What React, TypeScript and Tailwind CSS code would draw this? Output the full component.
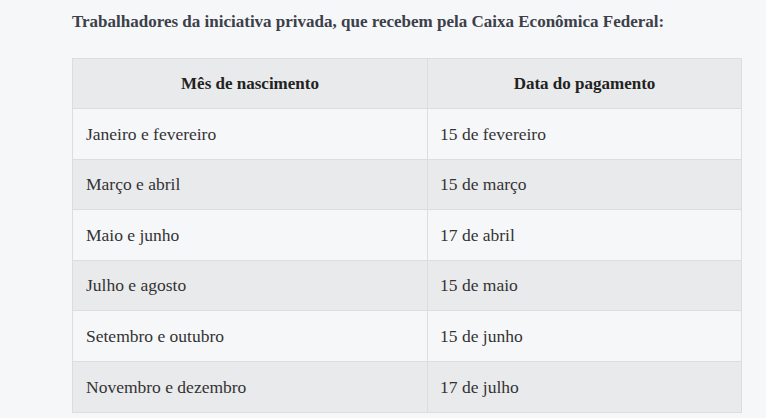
const rows = [
  ["Janeiro e fevereiro", "15 de fevereiro"],
  ["Março e abril", "15 de março"],
  ["Maio e junho", "17 de abril"],
  ["Julho e agosto", "15 de maio"],
  ["Setembro e outubro", "15 de junho"],
  ["Novembro e dezembro", "17 de julho"],
];

export default function App() {
  return (
    <div className="min-h-screen bg-[#f6f7f9] pl-[72px] pt-[11px] font-['Liberation_Serif',serif] text-[#333]">
      <p className="text-[17px] font-bold leading-[22px] text-[#3c4049]">
        Trabalhadores da iniciativa privada, que recebem pela Caixa Econômica Federal:
      </p>
      <table className="mt-[25px] w-[670px] border-collapse">
        <thead>
          <tr className="h-[50px] bg-[#e9eaeb] text-[17px]">
            <th className="w-[355px] border border-[#dcdddf] text-center font-bold text-[#222]">Mês de nascimento</th>
            <th className="border border-[#dcdddf] text-center font-bold text-[#222]">Data do pagamento</th>
          </tr>
        </thead>
        <tbody className="text-[17.5px]">
          {rows.map(([mes, data], i) => (
            <tr key={mes} className={`h-[50.6px] ${i % 2 === 0 ? "bg-[#f6f7f9]" : "bg-[#e9eaec]"}`}>
              <td className="border border-[#dcdddf] px-[13px]">{mes}</td>
              <td className="border border-[#dcdddf] px-[12px]">{data}</td>
            </tr>
          ))}
        </tbody>
      </table>
    </div>
  );
}
